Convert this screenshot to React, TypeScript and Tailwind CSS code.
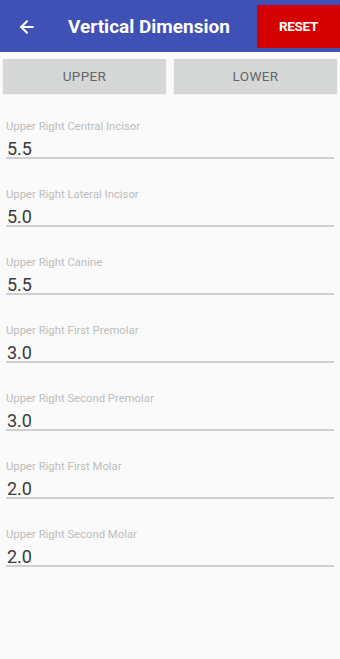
import { ArrowLeft } from "lucide-react";

const fields = [
  { label: "Upper Right Central Incisor", value: "5.5" },
  { label: "Upper Right Lateral Incisor", value: "5.0" },
  { label: "Upper Right Canine", value: "5.5" },
  { label: "Upper Right First Premolar", value: "3.0" },
  { label: "Upper Right Second Premolar", value: "3.0" },
  { label: "Upper Right First Molar", value: "2.0" },
  { label: "Upper Right Second Molar", value: "2.0" },
];

function Field(props: { label: string; value: string }) {
  return (
    <div className="pt-[28px] pb-[2px] px-[6px]">
      <div className="h-[12px] text-[11.3px] leading-[12px] text-[#bdbdbd]">{props.label}</div>
      <div className="pt-[7px] pl-[1px] text-[18px] leading-[17px] text-[#3a3a3a] border-b-2 border-[#cfcfcf]">
        {props.value}
      </div>
    </div>
  );
}

export default function App() {
  return (
    <div className="w-[340px] h-[659px] bg-[#fafafa] font-['Roboto',sans-serif] overflow-hidden">
      <div className="h-[52px] bg-[#3f51b5] flex items-center">
        <button type="button" className="ml-[16px] mt-[2px] w-[22px] h-[22px] flex items-center justify-center text-white">
          <ArrowLeft size={20} strokeWidth={2.5} />
        </button>
        <div className="ml-[30px] mt-[2px] flex-1 text-white text-[19px] font-bold">Vertical Dimension</div>
        <button
          type="button"
          className="self-stretch mt-[5px] mb-[4px] w-[83px] bg-[#d50000] text-white text-[13.5px] font-bold tracking-tight"
        >
          RESET
        </button>
      </div>
      <div className="flex gap-[8px] px-[3px] pt-[7px]">
        <button
          type="button"
          className="flex-1 h-[34px] bg-[#d6d7d7] text-[13.5px] text-[#666666] tracking-wide shadow-[0_1px_1px_rgba(0,0,0,0.15)]"
        >
          UPPER
        </button>
        <button
          type="button"
          className="flex-1 h-[34px] bg-[#d6d7d7] text-[13.5px] text-[#666666] tracking-wide shadow-[0_1px_1px_rgba(0,0,0,0.15)]"
        >
          LOWER
        </button>
      </div>
      <div>
        {fields.map((f) => (
          <Field key={f.label} label={f.label} value={f.value} />
        ))}
      </div>
    </div>
  );
}
